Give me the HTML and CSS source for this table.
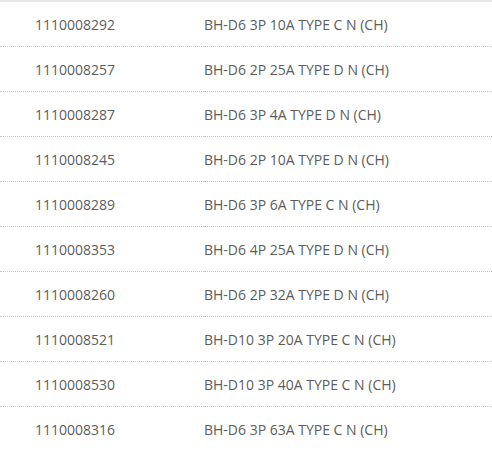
FILE: index.html
```html
<!DOCTYPE html>
<html>
<head>
<meta charset="utf-8">
<link rel="stylesheet" href="styles.css">
</head>
<body>
<table class="parts">
<tbody>
<tr><td class="code">1110008292</td><td class="desc">BH-D6 3P 10A TYPE C N (CH)</td></tr>
<tr><td class="code">1110008257</td><td class="desc">BH-D6 2P 25A TYPE D N (CH)</td></tr>
<tr><td class="code">1110008287</td><td class="desc">BH-D6 3P 4A TYPE D N (CH)</td></tr>
<tr><td class="code">1110008245</td><td class="desc">BH-D6 2P 10A TYPE D N (CH)</td></tr>
<tr><td class="code">1110008289</td><td class="desc">BH-D6 3P 6A TYPE C N (CH)</td></tr>
<tr><td class="code">1110008353</td><td class="desc">BH-D6 4P 25A TYPE D N (CH)</td></tr>
<tr><td class="code">1110008260</td><td class="desc">BH-D6 2P 32A TYPE D N (CH)</td></tr>
<tr><td class="code">1110008521</td><td class="desc">BH-D10 3P 20A TYPE C N (CH)</td></tr>
<tr><td class="code">1110008530</td><td class="desc">BH-D10 3P 40A TYPE C N (CH)</td></tr>
<tr><td class="code">1110008316</td><td class="desc">BH-D6 3P 63A TYPE C N (CH)</td></tr>
</tbody>
</table>
</body>
</html>
```
FILE: styles.css
```css
html, body {
  margin: 0;
  padding: 0;
  background: #fff;
}
.parts {
  width: 492px;
  border-collapse: collapse;
  border-top: 2px solid #e6e6e6;
  font-family: "Open Sans", sans-serif;
  font-size: 14px;
  color: #5c5c5c;
}
.parts td {
  height: 44px;
  padding: 0;
  vertical-align: middle;
  border-bottom: 1px dotted #c8c8c8;
}
.parts tr:last-child td {
  border-bottom: none;
}
.code {
  width: 169px;
  padding-left: 35px !important;
}
.desc {
  padding-left: 0;
}
```
